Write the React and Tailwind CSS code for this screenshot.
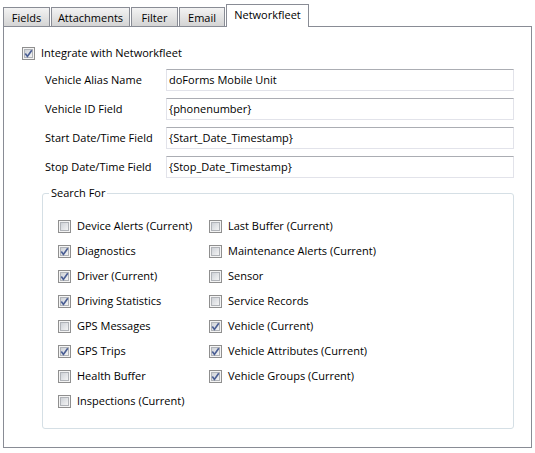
import React from 'react';

const tabs = [
  ['Fields', 'w-[47px]'],
  ['Attachments', 'w-[79px]'],
  ['Filter', 'w-[47px]'],
  ['Email', 'w-[46px]'],
];

const fields = [
  ['Vehicle Alias Name', 'doForms Mobile Unit'],
  ['Vehicle ID Field', '{phonenumber}'],
  ['Start Date/Time Field', '{Start_Date_Timestamp}'],
  ['Stop Date/Time Field', '{Stop_Date_Timestamp}'],
];

const leftCol = [
  ['Device Alerts (Current)', false],
  ['Diagnostics', true],
  ['Driver (Current)', true],
  ['Driving Statistics', true],
  ['GPS Messages', false],
  ['GPS Trips', true],
  ['Health Buffer', false],
  ['Inspections (Current)', false],
];

const rightCol = [
  ['Last Buffer (Current)', false],
  ['Maintenance Alerts (Current)', false],
  ['Sensor', false],
  ['Service Records', false],
  ['Vehicle (Current)', true],
  ['Vehicle Attributes (Current)', true],
  ['Vehicle Groups (Current)', true],
];

const CheckBox = ({ checked }) => (
  <svg width="13" height="13" viewBox="0 0 13 13" className="shrink-0">
    <defs>
      <linearGradient id="cbg" x1="0" y1="0" x2="1" y2="1">
        <stop offset="0" stopColor="#cbcfd5" />
        <stop offset="1" stopColor="#f6f6f6" />
      </linearGradient>
    </defs>
    <rect x="0.5" y="0.5" width="12" height="12" fill="#f4f4f4" stroke="#8f8f8f" />
    <rect x="2.5" y="2.5" width="8" height="8" fill="url(#cbg)" stroke="#b0b3b8" />
    {checked && (
      <path d="M3.3 6.6 L5.4 9.4 L9.8 3.2" fill="none" stroke="#4a5e94" strokeWidth="1.7" />
    )}
  </svg>
);

const Check = ({ label, checked }) => (
  <div className="flex items-center h-[25px]">
    <CheckBox checked={checked} />
    <span className="ml-[6px] whitespace-nowrap">{label}</span>
  </div>
);

export default function App() {
  return (
    <div
      className="w-[535px] h-[453px] bg-white text-[11px] text-black pt-[4px] pl-[3px]"
      style={{ fontFamily: '"Open Sans", "Noto Sans", sans-serif' }}
    >
      {/* tab strip */}
      <div className="flex items-end h-[22px]">
        {tabs.map(([t, w]) => (
          <div
            key={t}
            className={`${w} h-[19px] mr-[1px] flex items-center justify-center border border-b-0 border-[#898c95] bg-gradient-to-b from-[#f3f3f3] to-[#d4d4d4] leading-none`}
          >
            {t}
          </div>
        ))}
        <div className="w-[83px] h-[23px] flex justify-center pt-[3px] border border-b-0 border-[#898c95] bg-white relative top-[1px] z-10 leading-[14px]">
          Networkfleet
        </div>
      </div>

      {/* panel */}
      <div className="w-[529px] h-[422px] border border-[#898c95] bg-white pt-[19px]">
        <div className="flex items-center pl-[18px] h-[14px]">
          <CheckBox checked />
          <span className="ml-[6px]">Integrate with Networkfleet</span>
        </div>

        <div className="mt-[9px] flex flex-col gap-[7px] pl-[41px] pr-[17px]">
          {fields.map(([label, value]) => (
            <div key={label} className="flex items-center h-[22px]">
              <span className="w-[121px] whitespace-nowrap">{label}</span>
              <div className="flex-1 h-[22px] border border-[#e2e3ea] border-t-[#abadb3] flex items-center pl-[2px]">
                {value}
              </div>
            </div>
          ))}
        </div>

        {/* group box */}
        <div className="mt-[15px] ml-[38px] mr-[17px] h-[236px] border border-[#d5dfe5] rounded-[3px] relative pt-[20px] pl-[15px]">
          <span className="absolute -top-[10px] left-[6px] bg-white px-[2px] leading-[18px]">Search For</span>
          <div className="flex">
            <div className="w-[151px] flex flex-col">
              {leftCol.map(([l, c]) => (
                <Check key={l} label={l} checked={c} />
              ))}
            </div>
            <div className="flex flex-col">
              {rightCol.map(([l, c]) => (
                <Check key={l} label={l} checked={c} />
              ))}
            </div>
          </div>
        </div>
      </div>
    </div>
  );
}
